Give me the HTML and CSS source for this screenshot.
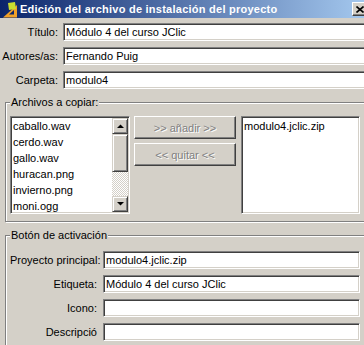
FILE: index.html
```html
<!DOCTYPE html>
<html lang="es">
<head>
<meta charset="utf-8">
<title>Edición del archivo de instalación del proyecto</title>
<link rel="stylesheet" href="styles.css">
</head>
<body>
<div class="window">
  <div class="titlebar">
    <svg class="appicon" viewBox="0 0 17 17" width="17" height="17">
      <polygon points="2,16.5 16,16.5 16,4" fill="#f0a028"/>
      <polygon points="8,13.5 13,13.5 13,9" fill="#0a246a"/>
      <polygon points="7,2 14,1 15,8 8,9" fill="#c8dc30"/>
    </svg>
    <span class="title">Edición del archivo de instalación del proyecto</span>
    <div class="closebtn">
      <svg width="8" height="7" viewBox="0 0 8 7"><path d="M0.5 0.5 L7.5 6.5 M7.5 0.5 L0.5 6.5" stroke="#000" stroke-width="1.6" fill="none"/></svg>
    </div>
  </div>

  <div class="form">
    <div class="row"><span class="lbl">Título:</span><div class="field wide">Módulo 4 del curso JClic</div></div>
    <div class="row"><span class="lbl">Autores/as:</span><div class="field wide">Fernando Puig</div></div>
    <div class="row"><span class="lbl">Carpeta:</span><div class="field wide">modulo4</div></div>
  </div>

  <fieldset class="group files">
    <legend>Archivos a copiar:</legend>
    <div class="files-body">
      <div class="listbox source">
        <ul class="items">
          <li>caballo.wav</li>
          <li>cerdo.wav</li>
          <li>gallo.wav</li>
          <li>huracan.png</li>
          <li>invierno.png</li>
          <li>moni.ogg</li>
        </ul>
        <div class="vscroll">
          <div class="sbtn"><svg width="7" height="4" viewBox="0 0 7 4"><polygon points="0,4 7,4 3.5,0.5" fill="#000"/></svg></div>
          <div class="thumb"></div>
          <div class="track"></div>
          <div class="sbtn"><svg width="7" height="4" viewBox="0 0 7 4"><polygon points="0,0 7,0 3.5,3.5" fill="#000"/></svg></div>
        </div>
      </div>
      <div class="actions">
        <button class="btn" disabled>&gt;&gt; añadir &gt;&gt;</button>
        <button class="btn" disabled>&lt;&lt; quitar &lt;&lt;</button>
      </div>
      <div class="listbox target">
        <ul class="items">
          <li>modulo4.jclic.zip</li>
        </ul>
      </div>
    </div>
  </fieldset>

  <fieldset class="group activation">
    <legend>Botón de activación</legend>
    <div class="act-rows">
      <div class="row"><span class="lbl lbl2">Proyecto principal:</span><div class="field">modulo4.jclic.zip</div></div>
      <div class="row"><span class="lbl lbl2">Etiqueta:</span><div class="field">Módulo 4 del curso JClic</div></div>
      <div class="row"><span class="lbl lbl2">Icono:</span><div class="field"></div></div>
      <div class="row"><span class="lbl lbl2">Descripció</span><div class="field"></div></div>
    </div>
  </fieldset>
</div>
</body>
</html>
```

FILE: styles.css
```css
html, body {
  margin: 0;
  padding: 0;
  overflow: hidden;
  background: #d4d0c8;
}

body {
  width: 364px;
  height: 345px;
  font-family: "Liberation Sans", Arial, sans-serif;
  font-size: 11px;
  color: #000;
}

.window {
  width: 370px;
}

/* Title bar */
.titlebar {
  height: 18px;
  display: flex;
  align-items: center;
  background: linear-gradient(to right, #0a246a, #a6caf0);
}

.appicon {
  flex: none;
  margin-left: 1px;
  margin-right: 2px;
}

.title {
  color: #fff;
  font-weight: bold;
  font-size: 11px;
  letter-spacing: 0.25px;
  white-space: nowrap;
}

.closebtn {
  margin-left: auto;
  margin-right: 2px;
  width: 16px;
  height: 14px;
  box-sizing: border-box;
  background: #d4d0c8;
  border: 1px solid;
  border-color: #fff #404040 #404040 #fff;
  box-shadow: inset -1px -1px #808080;
  display: flex;
  align-items: center;
  justify-content: center;
}

/* Top form */
.form {
  padding-top: 5px;
  display: flex;
  flex-direction: column;
  gap: 6px;
}

.row {
  display: flex;
  align-items: center;
  height: 18px;
}

.lbl {
  flex: none;
  width: 63px;
  padding-right: 5px;
  box-sizing: border-box;
  text-align: right;
  white-space: nowrap;
}

.lbl2 {
  width: 93px;
  padding-right: 6px;
  overflow: hidden;
}

.field {
  flex: 1;
  min-width: 0;
  height: 18px;
  box-sizing: border-box;
  border: 1px solid;
  border-color: #808080 #fff #fff #808080;
  box-shadow: inset 1px 1px #404040, inset -1px -1px #d4d0c8;
  background: #fff;
  padding: 0 2px;
  line-height: 16px;
  white-space: nowrap;
  overflow: hidden;
}

.field.wide {
  margin-right: 2px;
}

/* Group boxes */
.group {
  margin: 7px 5px 0;
  padding: 7px 4px 7px;
  border: 1px solid #808080;
  box-shadow: inset 1px 1px #fff, 1px 1px #fff;
  min-width: 0;
}

.group legend {
  padding: 0 1px;
  margin: 0;
  height: 13px;
  line-height: 13px;
  background: #d4d0c8;
}

.activation {
  padding-top: 9px;
}

.files-body {
  display: flex;
  height: 98px;
}

.listbox {
  box-sizing: border-box;
  height: 98px;
  border: 1px solid;
  border-color: #808080 #fff #fff #808080;
  box-shadow: inset 1px 1px #404040, inset -1px -1px #d4d0c8;
  background: #fff;
  padding: 1px;
  display: flex;
  overflow: hidden;
}

.source {
  width: 120px;
  flex: none;
  margin-right: 4px;
}

.target {
  flex: 1;
  margin-left: 5px;
}

.items {
  flex: 1;
  margin: 0;
  padding: 0;
  list-style: none;
  overflow: hidden;
}

.items li {
  height: 16px;
  line-height: 16px;
  padding-left: 1px;
  white-space: nowrap;
}

/* Scrollbar */
.vscroll {
  flex: none;
  width: 16px;
  display: flex;
  flex-direction: column;
}

.sbtn,
.thumb {
  flex: none;
  height: 16px;
  box-sizing: border-box;
  background: #d4d0c8;
  border: 1px solid;
  border-color: #d4d0c8 #404040 #404040 #d4d0c8;
  box-shadow: inset 1px 1px #fff, inset -1px -1px #808080;
  display: flex;
  align-items: center;
  justify-content: center;
}

.thumb {
  height: 38px;
}

.track {
  flex: 1;
  background-color: #d4d0c8;
  background-image: conic-gradient(#fff 25%, #d4d0c8 0 50%, #fff 0 75%, #d4d0c8 0);
  background-size: 2px 2px;
}

/* Buttons */
.actions {
  flex: none;
  width: 102px;
  display: flex;
  flex-direction: column;
  gap: 4px;
}

.btn {
  width: 102px;
  height: 23px;
  box-sizing: border-box;
  padding: 0;
  background: #d4d0c8;
  border: 1px solid;
  border-color: #fff #404040 #404040 #fff;
  box-shadow: inset -1px -1px #808080;
  font-family: "Liberation Sans", Arial, sans-serif;
  font-size: 11px;
  color: #808080;
  text-shadow: 1px 1px #fff;
}

.act-rows {
  display: flex;
  flex-direction: column;
  gap: 6px;
}
```
